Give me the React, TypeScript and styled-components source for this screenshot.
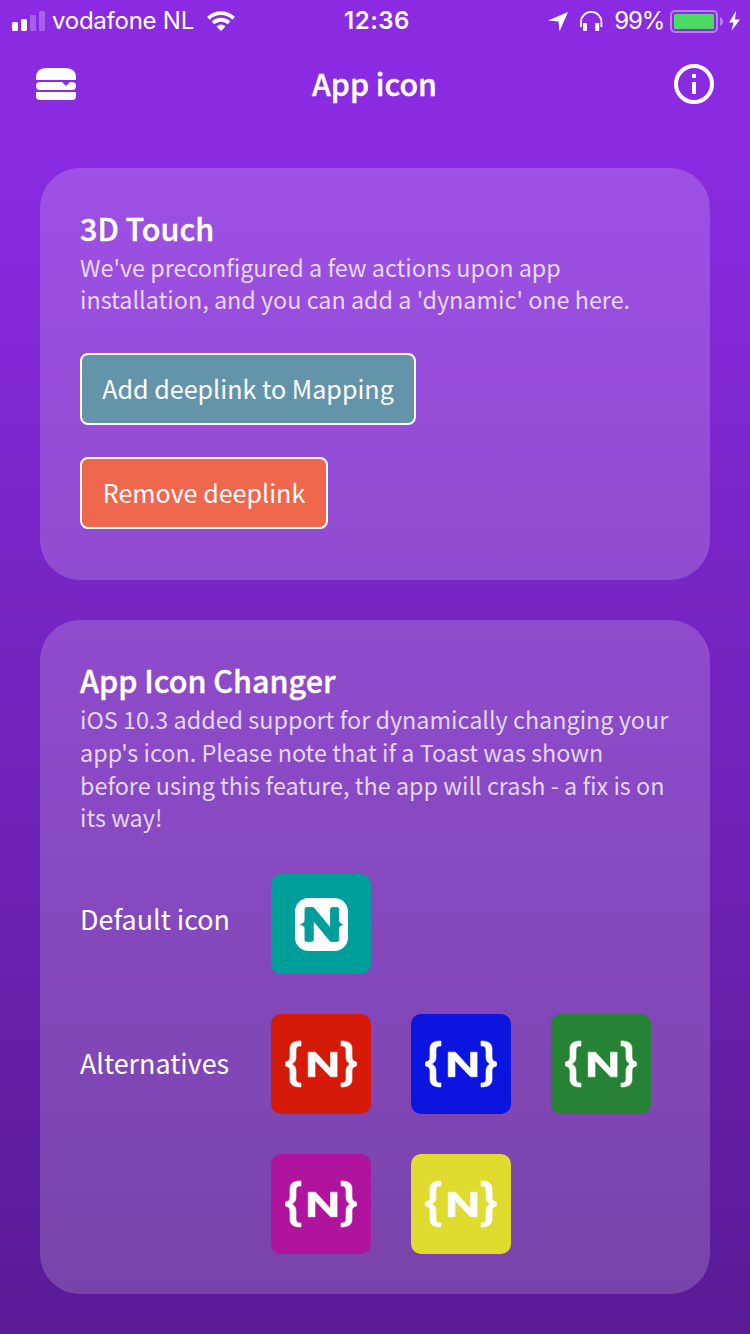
import React from 'react';
import styled, { createGlobalStyle } from 'styled-components';

const GlobalStyle = createGlobalStyle`
  * { box-sizing: border-box; }
  body { margin: 0; background: #8a2be2; }
`;

const Screen = styled.div`
  width: 750px;
  height: 1334px;
  overflow: hidden;
  display: flex;
  flex-direction: column;
  background: #8a2be2;
  color: #fff;
  font-family: 'Noto Sans CJK SC', 'Noto Sans', sans-serif;
`;

const StatusBar = styled.header`
  height: 40px;
  display: grid;
  grid-template-columns: 1fr auto 1fr;
  align-items: center;
  padding: 0 9px 0 12px;
  font-family: Inter, sans-serif;
  font-size: 24px;
  line-height: 42px;
`;

const StatusGroup = styled.div<{ $end?: boolean }>`
  display: flex;
  align-items: center;
  justify-content: ${p => (p.$end ? 'flex-end' : 'flex-start')};
  height: 40px;
`;

const Carrier = styled.span`
  margin: 0 13px 0 6px;
  letter-spacing: -0.25px;
`;

const Clock = styled.span`
  padding-left: 1px;
  font-weight: 600;
  letter-spacing: 0.5px;
`;

const Percent = styled.span`
  margin: 0 6px 0 11px;
  letter-spacing: -1.2px;
`;

const ActionBar = styled.nav`
  height: 88px;
  display: grid;
  grid-template-columns: 40px 1fr 40px;
  align-items: center;
  padding: 0 36px;
`;

const Title = styled.h1`
  margin: 0;
  padding: 0 1px 2px 0;
  text-align: center;
  font-size: 30.3px;
  font-weight: 500;
  line-height: 44px;
  -webkit-text-stroke: 0.4px #fff;
`;

const Content = styled.main`
  flex: 1;
  display: flex;
  flex-direction: column;
  gap: 40px;
  padding: 40px;
  background: linear-gradient(to bottom, #8a2be2, #5a1b95);
`;

const Card = styled.section<{ $height: number }>`
  height: ${p => p.$height}px;
  padding: 40px;
  border-radius: 40px;
  background: rgba(255, 255, 255, 0.18);
`;

const Heading = styled.h2`
  margin: 0 0 3.25px;
  font-size: 30.5px;
  font-weight: 500;
  line-height: 40px;
  -webkit-text-stroke: 0.4px #fff;
`;

const Paragraph = styled.p<{ $leading: number }>`
  margin: 0;
  color: rgba(255, 255, 255, 0.78);
  font-size: 23.36px;
  line-height: ${p => p.$leading}px;
  white-space: nowrap;
`;

const Actions = styled.div`
  display: flex;
  flex-direction: column;
  align-items: flex-start;
  gap: 32px;
  margin-top: 37.75px;
`;

const Button = styled.button<{ $color: string; $width: number }>`
  width: ${p => p.$width}px;
  height: 72px;
  padding: 0 0 2px;
  border: 2px solid #fff;
  border-radius: 8px;
  background: ${p => p.$color};
  color: #fff;
  font: 400 25.1px/66px 'Noto Sans CJK SC', 'Noto Sans', sans-serif;
  white-space: nowrap;
`;

const IconTable = styled.div`
  display: grid;
  grid-template-columns: 191px 1fr;
  row-gap: 40px;
  margin-top: 39.95px;
`;

const Label = styled.span<{ $leading: number }>`
  height: 100px;
  font-size: 26.9px;
  line-height: ${p => p.$leading}px;
`;

const Tiles = styled.div`
  display: grid;
  grid-template-columns: repeat(3, 100px);
  gap: 40px;
`;

const Tile = styled.div<{ $color: string }>`
  height: 100px;
  border-radius: 10px;
  background: ${p => p.$color};
`;

const Drawing = styled.svg`
  display: block;
  flex: none;
`;

const BracedN = () => (
  <Drawing width="100" height="100" viewBox="0 0 100 100" fill="#fff" stroke="#fff" strokeWidth=".6">
    <path d="M30 27v5c-4 0-5 1-5 5v5c0 4-1 7-5 8 4 1 5 4 5 8v6c0 4 1 5 5 5v4c-7 0-11-2-11-8v-7c0-4-1-5-4.500-6v-4c3.500-1 4.500-2 4.500-6v-7c0-6 4-8 11-8Z" />
    <path d="M70 27v5c4 0 5 1 5 5v5c0 4 1 7 5 8-4 1-5 4-5 8v6c0 4-1 5-5 5v4c7 0 11-2 11-8v-7c0-4 1-5 4.500-6v-4c-3.500-1-4.500-2-4.500-6v-7c0-6-4-8-11-8Z" />
    <path d="M37.200 38.200h7.300l15 16.500V38.200h6.600v24.600h-6.600L44 46.500v16.300h-6.800Z" />
  </Drawing>
);

const BadgeN = () => (
  <Drawing width="100" height="100" viewBox="0 0 100 100">
    <rect x="24" y="24" width="53" height="53" rx="13.500" fill="#fff" />
    <path
      fill="#009e9b"
      stroke="#009e9b"
      strokeWidth=".9"
      d="M35.500 33.600H42.500L59.500 54V35.300q0-1.700 1.700-1.700h5.100q1.200 0 1.200 1.200V46q0 3.300 4 4.500-4 1.200-4 4.500v11.200q0 1.200-1.200 1.200H59.500L42.300 46.500V65.700q0 1.700-1.700 1.700h-5.100q-1.500 0-1.500-1.500V55q0-3.300-4.500-4.500 4.500-1.200 4.500-4.500V35.100q0-1.500 1.500-1.500Z"
    />
  </Drawing>
);

const alternatives = ['#d51a09', '#0c14df', '#268235', '#b0139d', '#e0db2f'];

export default function App() {
  return (
    <Screen>
      <GlobalStyle />
      <StatusBar>
        <StatusGroup>
          <Drawing width="34" height="40" fill="#fff">
            <rect x="0" y="21" width="6" height="9" rx="1.500" />
            <rect x="9" y="18" width="6" height="12" rx="1.500" />
            <rect x="18" y="14" width="6" height="16" rx="1.500" opacity=".25" />
            <rect x="27" y="10" width="6" height="20" rx="1.500" opacity=".25" />
          </Drawing>
          <Carrier>vodafone NL</Carrier>
          <Drawing width="28" height="40" fill="none" stroke="#fff" strokeWidth="3.900">
            <path d="M1.400 17.300A18 18 0 0 1 26.600 17.300" />
            <path d="M6 21.900A11.600 11.600 0 0 1 22 21.900" />
            <path d="M9.500 25.500Q14 21.500 18.500 25.500L14 30Z" fill="#fff" stroke="none" />
          </Drawing>
        </StatusGroup>
        <Clock>12:36</Clock>
        <StatusGroup $end>
          <Drawing width="55" height="40" fill="#fff">
            <path d="M20 11 11.500 30.500 10.500 20.500 0 19.500Z" />
            <path d="M33 26v-5a10.200 10.200 0 0 1 20.400 0V26" fill="none" stroke="#fff" strokeWidth="1.800" />
            <rect x="35" y="22" width="4" height="8" rx=".7" />
            <rect x="47.200" y="22" width="4" height="8" rx=".7" />
          </Drawing>
          <Percent>99%</Percent>
          <Drawing width="71" height="40" fill="#fff">
            <rect x="1" y="10" width="46" height="21" rx="4" fill="none" stroke="#fff" strokeWidth="2" opacity=".4" />
            <rect x="4" y="13" width="40" height="15" rx="1.500" fill="#4cd964" />
            <path d="M50 16q3 1.500 3 4.500t-3 4.500Z" opacity=".4" />
            <path d="M66 10 59 21.500h4.500L61.500 30 70 18.500h-5Z" />
          </Drawing>
        </StatusGroup>
      </StatusBar>
      <ActionBar>
        <Drawing width="40" height="40" fill="#fff">
          <path d="M0 16v-2Q0 4 10 4h20q10 0 10 10v2Z" />
          <path d="M4 18h22l4 4 4-4h2a4 4 0 0 1 0 8H4a4 4 0 0 1 0-8Z" />
          <path d="M0 28h40v4q0 4-4 4H4q-4 0-4-4Z" />
        </Drawing>
        <Title>App icon</Title>
        <Drawing width="40" height="40" fill="#fff">
          <circle cx="20" cy="20" r="18" fill="none" stroke="#fff" strokeWidth="4" />
          <rect x="18" y="10" width="4" height="4" />
          <rect x="18" y="18" width="4" height="12" />
        </Drawing>
      </ActionBar>
      <Content>
        <Card $height={412}>
          <Heading>3D Touch</Heading>
          <Paragraph $leading={32}>
            We've preconfigured a few actions upon app
            <br />
            installation, and you can add a 'dynamic' one here.
          </Paragraph>
          <Actions>
            <Button $color="#6494aa" $width={336}>Add deeplink to Mapping</Button>
            <Button $color="#ef684d" $width={248}>Remove deeplink</Button>
          </Actions>
        </Card>
        <Card $height={674}>
          <Heading>App Icon Changer</Heading>
          <Paragraph $leading={32.7}>
            iOS 10.3 added support for dynamically changing your
            <br />
            app's icon. Please note that if a Toast was shown
            <br />
            before using this feature, the app will crash - a fix is on
            <br />
            its way!
          </Paragraph>
          <IconTable>
            <Label $leading={90}>Default icon</Label>
            <Tiles>
              <Tile $color="#009e9b">
                <BadgeN />
              </Tile>
            </Tiles>
            <Label $leading={98}>Alternatives</Label>
            <Tiles>
              {alternatives.map(color => (
                <Tile key={color} $color={color}>
                  <BracedN />
                </Tile>
              ))}
            </Tiles>
          </IconTable>
        </Card>
      </Content>
    </Screen>
  );
}
